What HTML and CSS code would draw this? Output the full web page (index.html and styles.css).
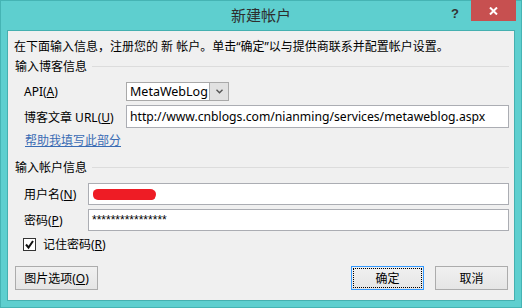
FILE: index.html
```html
<html>

<head>
    <meta charset="utf-8">
    <link rel="stylesheet" href="styles.css">
</head>

<body>
    <div class="window">
        <!-- Title bar -->
        <div class="titlebar">
            <span></span>
            <h1 class="title">新建帐户</h1>
            <div class="title-controls">
                <span class="help">?</span>
                <button class="close">
                    <svg width="9" height="8" viewBox="0 0 9 8">
                        <path d="M1 0.5 L8 7.5 M8 0.5 L1 7.5" stroke="#fff" stroke-width="2" fill="none" />
                    </svg>
                </button>
            </div>
        </div>

        <!-- Dialog body -->
        <div class="panel">
            <p class="intro">在下面输入信息，注册您的 新 帐户。单击“确定”以与提供商联系并配置帐户设置。</p>

            <div class="group-head">
                <span>输入博客信息</span>
                <span class="rule"></span>
            </div>
            <div class="field-row blog-row api-row">
                <label class="field-label">API(<u>A</u>)</label>
                <div class="select">
                    <span>MetaWebLog</span>
                    <span class="select-btn">
                        <svg width="7" height="5" viewBox="0 0 7 5">
                            <path d="M0.5 0.8 L3.5 3.8 L6.5 0.8" stroke="#555" stroke-width="1.4" fill="none" />
                        </svg>
                    </span>
                </div>
            </div>
            <div class="field-row blog-row url-row">
                <label class="field-label">博客文章 URL(<u>U</u>)</label>
                <div class="input url-input">http://www.cnblogs.com/nianming/services/metaweblog.aspx</div>
            </div>
            <a class="help-link" href="#">帮助我填写此部分</a>

            <div class="group-head account-head">
                <span>输入帐户信息</span>
                <span class="rule"></span>
            </div>
            <div class="field-row account-row user-row">
                <label class="field-label">用户名(<u>N</u>)</label>
                <div class="input user-input">
                    <span class="scribble"></span>
                </div>
            </div>
            <div class="field-row account-row pass-row">
                <label class="field-label">密码(<u>P</u>)</label>
                <div class="input pass-input">****************</div>
            </div>
            <label class="check">
                <span class="check-box">
                    <svg width="11" height="11" viewBox="0 0 11 11">
                        <path d="M2 5.5 L4.5 8.5 L9 2" stroke="#111" stroke-width="2" fill="none" />
                    </svg>
                </span>
                记住密码(<u>R</u>)
            </label>

            <div class="buttons">
                <button class="btn btn-wide">图片选项(<u>O</u>)</button>
                <span class="spacer"></span>
                <button class="btn btn-primary">确定</button>
                <button class="btn">取消</button>
            </div>
        </div>
    </div>
</body>

</html>
```

FILE: styles.css
```css
* {
    margin: 0;
    padding: 0;
    box-sizing: border-box;
    font-family: "Noto Sans", "Noto Sans CJK SC", sans-serif;
}

body {
    background: #5ecfcf;
}

.window {
    width: 522px;
    height: 308px;
    background: #5ecfcf;
    border: 1px solid #45b4b4;
    display: flex;
    flex-direction: column;
}

/* Title bar */
.titlebar {
    height: 29px;
    display: grid;
    grid-template-columns: 1fr auto 1fr;
}

.title {
    font-family: "Noto Sans CJK SC", sans-serif;
    font-size: 15px;
    font-weight: normal;
    color: #2e2e2e;
    line-height: 28px;
}

.title-controls {
    display: flex;
    justify-content: flex-end;
    align-items: flex-start;
    margin-right: 5px;
}

.help {
    font-family: "Liberation Sans", sans-serif;
    font-weight: bold;
    font-size: 13px;
    color: #333;
    margin-top: 5px;
    margin-right: 12px;
}

.close {
    width: 45px;
    height: 21px;
    margin-top: -1px;
    border: none;
    background: #c75050;
    display: flex;
    align-items: center;
    justify-content: center;
}

/* Panel */
.panel {
    flex: 1;
    margin: 0 6px 6px;
    background: #f0f0f0;
    border: 1px solid #45b0b0;
    display: flex;
    flex-direction: column;
    font-size: 12px;
    color: #000;
}

.intro {
    margin: 7px 0 0 6px;
    line-height: 18px;
    font-size: 12px;
}

.group-head {
    margin: 2px 5px 0 7px;
    height: 16px;
    display: flex;
    align-items: center;
    font-family: "Noto Sans CJK SC", sans-serif;
}

.account-head {
    margin-top: 10px;
}

.rule {
    flex: 1;
    height: 1px;
    background: #dcdcdc;
    margin-left: 5px;
}

.field-row {
    display: flex;
    align-items: center;
    margin: 4px 5px 0 16px;
}

.api-row {
    margin-top: 8px;
}

.user-row {
    margin-top: 8px;
}

.blog-row .field-label {
    width: 102px;
}

.account-row .field-label {
    width: 64px;
}

.select {
    width: 103px;
    height: 19px;
    border: 1px solid #a9a9a9;
    background: #fff;
    display: flex;
    align-items: center;
    padding-left: 3px;
    font-size: 12.5px;
}

.select-btn {
    margin-left: auto;
    width: 19px;
    height: 17px;
    background: #e1e1e1;
    border-left: 1px solid #acacac;
    display: flex;
    align-items: center;
    justify-content: center;
}

.input {
    flex: 1;
    height: 22px;
    border: 1px solid #abadb3;
    background: #fff;
    display: flex;
    align-items: center;
    padding-left: 3px;
}

.url-input {
    height: 23px;
    font-size: 12.2px;
}

/* red redaction blob over the user name */
.scribble {
    display: block;
    width: 63px;
    height: 11px;
    margin: 1px 0 0 1px;
    background: #ee1c25;
    border-radius: 5px 6px 4px 5px / 4px 5px 6px 5px;
}

.pass-input {
    align-items: flex-start;
    padding-top: 3px;
    font-family: "Liberation Sans", sans-serif;
    font-size: 12px;
}

.help-link {
    margin: 5px 0 0 17px;
    line-height: 16px;
    color: #3a6cb4;
    text-decoration: underline;
    align-self: flex-start;
}

.check {
    margin: 6px 0 0 15px;
    height: 14px;
    display: flex;
    align-items: center;
}

.check-box {
    width: 13px;
    height: 13px;
    border: 1px solid #333;
    background: #fff;
    margin-right: 7px;
    display: flex;
    align-items: center;
    justify-content: center;
}

.buttons {
    margin: 15px 6px 0 7px;
    display: flex;
    gap: 11px;
}

.spacer {
    flex: 1;
}

.btn {
    width: 73px;
    height: 24px;
    border: 1px solid #acacac;
    background: linear-gradient(#f0f0f0, #e5e5e5);
    font-size: 12px;
    color: #000;
}

.btn-wide {
    width: 83px;
}

.btn-primary {
    border-color: #3399ff;
    outline: 1px dotted #000;
    outline-offset: -3px;
}
```
